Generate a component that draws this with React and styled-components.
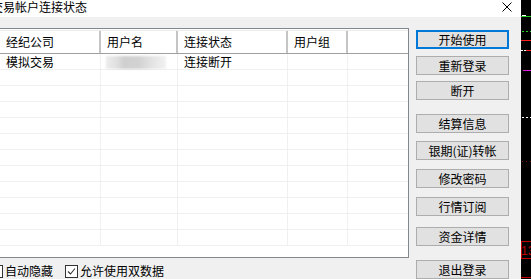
import styled, { createGlobalStyle } from "styled-components";

const GlobalStyle = createGlobalStyle`
  html, body {
    margin: 0;
    padding: 0;
    background: #000;
  }
  body {
    font-family: "Noto Sans CJK SC", "Noto Sans", sans-serif;
    font-size: 12px;
    color: #000;
  }
`;

const Screen = styled.div`
  display: flex;
  width: 531px;
  height: 279px;
  overflow: hidden;
`;

const Window = styled.div`
  width: 521px;
  display: flex;
  flex-direction: column;
  background: #f0f0f0;
`;

const TitleBar = styled.div`
  height: 19px;
  background: #fff;
  display: flex;
  align-items: flex-start;
  justify-content: space-between;
  line-height: 14px;
`;

const Title = styled.span`
  margin-left: -9px;
  margin-top: 0;
  white-space: nowrap;
`;

const CloseBtn = styled.svg`
  margin: 2px 9px 0 0;
`;

const Body = styled.div`
  flex: 1;
  display: flex;
  align-items: flex-start;
  padding-top: 11px;
`;

const LeftCol = styled.div`
  display: flex;
  flex-direction: column;
  margin-left: -1px;
`;

const ListBox = styled.div`
  width: 410px;
  height: 230px;
  box-sizing: border-box;
  border: 1px solid #828790;
  background: #fff;
  overflow: hidden;
`;

const Header = styled.div`
  display: flex;
  height: 24px;
  margin-top: 1px;
  box-sizing: border-box;
  border-top: 1px solid #ececec;
  border-bottom: 1px solid #a0a0a0;
`;

const HeadCell = styled.div`
  width: ${(p) => p.$w}px;
  flex: ${(p) => (p.$fill ? 1 : "none")};
  box-sizing: border-box;
  padding-left: 6px;
  line-height: 21px;
  border-right: ${(p) => (p.$fill ? "none" : "2px solid #c4c4c4")};
  color: #000;
`;

const Row = styled.div`
  display: flex;
  height: 16px;
  box-sizing: border-box;
  border-bottom: 1px solid #f0f0f0;
`;

const Cell = styled.div`
  width: ${(p) => p.$w}px;
  flex: ${(p) => (p.$fill ? 1 : "none")};
  box-sizing: border-box;
  padding-left: 6px;
  line-height: 15px;
  border-right: ${(p) => (p.$fill ? "none" : "1px solid #f0f0f0")};
  white-space: nowrap;
  position: relative;
`;

const Blur = styled.div`
  margin-top: 2px;
  margin-left: -1px;
  width: 60px;
  height: 13px;
  background: linear-gradient(
    to right,
    #ececec 0%,
    #e0e0e0 18%,
    #cfcfcf 30%,
    #d2d2d2 55%,
    #e2e2e2 75%,
    #f2f2f2 100%
  );
  filter: blur(1.2px);
`;

const CheckRow = styled.div`
  display: flex;
  align-items: center;
  margin-top: 6px;
  margin-left: -9px;
  height: 14px;
`;

const CheckLabel = styled.label`
  display: flex;
  align-items: center;
  gap: 2px;
  margin-right: ${(p) => p.$mr || 0}px;
  white-space: nowrap;
  line-height: 14px;
`;

const Box = styled.span`
  width: 11px;
  height: 11px;
  border: 1px solid #333;
  background: #fff;
  display: inline-flex;
  align-items: center;
  justify-content: center;
`;

const ButtonCol = styled.div`
  display: flex;
  flex-direction: column;
  margin-left: 7px;
  padding-top: 2px;
`;

const Button = styled.button`
  width: 93px;
  height: 19px;
  margin-top: ${(p) => p.$mt}px;
  box-sizing: border-box;
  padding: 0;
  background: #e1e1e1;
  border: ${(p) => (p.$primary ? "2px solid #0078d7" : "1px solid #adadad")};
  font-family: "Noto Sans CJK SC", "Noto Sans", sans-serif;
  font-size: 12px;
  line-height: 15px;
  color: #000;
`;

const Strip = styled.svg`
  display: block;
  flex: none;
`;

const cols = [
  { key: "broker", label: "经纪公司", w: 101 },
  { key: "user", label: "用户名", w: 77 },
  { key: "state", label: "连接状态", w: 110 },
  { key: "group", label: "用户组", w: 60 },
  { key: "rest", label: "", fill: true },
];

const buttons = [
  { label: "开始使用", mt: 0, primary: true },
  { label: "重新登录", mt: 7 },
  { label: "断开", mt: 6 },
  { label: "结算信息", mt: 14 },
  { label: "银期(证)转帐", mt: 8 },
  { label: "修改密码", mt: 9 },
  { label: "行情订阅", mt: 9 },
  { label: "资金详情", mt: 11 },
  { label: "退出登录", mt: 14 },
];

const rows = Array.from({ length: 12 }, (_, i) => i);

const App = () => {
  return (
    <Screen>
      <GlobalStyle />
      <Window>
        <TitleBar>
          <Title>交易帐户连接状态</Title>
          <CloseBtn width="10" height="10" viewBox="0 0 10 10">
            <path d="M0.5 0.5 L9.5 9.5 M9.5 0.5 L0.5 9.5" stroke="#000" strokeWidth="1" />
          </CloseBtn>
        </TitleBar>
        <Body>
          <LeftCol>
            <ListBox>
              <Header>
                {cols.map((c) => (
                  <HeadCell key={c.key} $w={c.w} $fill={c.fill}>
                    {c.label}
                  </HeadCell>
                ))}
              </Header>
              {rows.map((r) => (
                <Row key={r}>
                  <Cell $w={101}>{r === 0 ? "模拟交易" : ""}</Cell>
                  <Cell $w={77}>{r === 0 ? <Blur /> : ""}</Cell>
                  <Cell $w={110}>{r === 0 ? "连接断开" : ""}</Cell>
                  <Cell $w={60} />
                  <Cell $fill />
                </Row>
              ))}
            </ListBox>
            <CheckRow>
              <CheckLabel $mr={12}>
                <Box />
                自动隐藏
              </CheckLabel>
              <CheckLabel>
                <Box>
                  <svg width="9" height="9" viewBox="0 0 9 9">
                    <path d="M1 4.5 L3.5 7 L8 1.5" fill="none" stroke="#333" strokeWidth="1.1" />
                  </svg>
                </Box>
                允许使用双数据
              </CheckLabel>
            </CheckRow>
          </LeftCol>
          <ButtonCol>
            {buttons.map((b) => (
              <Button key={b.label} $mt={b.mt} $primary={b.primary}>
                {b.label}
              </Button>
            ))}
          </ButtonCol>
        </Body>
      </Window>
      <Strip width="10" height="279" viewBox="0 0 10 279">
        <rect x="0" y="0" width="10" height="279" fill="#000" />
        <line x1="1" y1="15.5" x2="5" y2="15.5" stroke="#fff" />
        <line x1="0" y1="16.5" x2="10" y2="16.5" stroke="#22cc22" />
        <line x1="1" y1="31.5" x2="10" y2="31.5" stroke="#22cc22" strokeDasharray="2 2" />
        <line x1="0" y1="40.5" x2="10" y2="40.5" stroke="#ff2020" />
        <line x1="0" y1="50.5" x2="5" y2="50.5" stroke="#fff" strokeDasharray="2 1" />
        <line x1="5" y1="50.5" x2="10" y2="50.5" stroke="#ff2020" />
        <line x1="2" y1="70.5" x2="10" y2="70.5" stroke="#e020e0" />
        <line x1="1" y1="117.5" x2="10" y2="117.5" stroke="#fff" strokeDasharray="2 2" />
        <line x1="1" y1="161.5" x2="10" y2="161.5" stroke="#801010" strokeDasharray="1 3" />
        <rect x="0.5" y="241.5" width="10" height="17" fill="none" stroke="#c00000" />
        <text x="0" y="255" fill="#c00000" fontSize="12" fontFamily="Liberation Sans, sans-serif">13</text>
        <line x1="0" y1="277.5" x2="10" y2="277.5" stroke="#c00000" />
      </Strip>
    </Screen>
  );
};

export default App;
